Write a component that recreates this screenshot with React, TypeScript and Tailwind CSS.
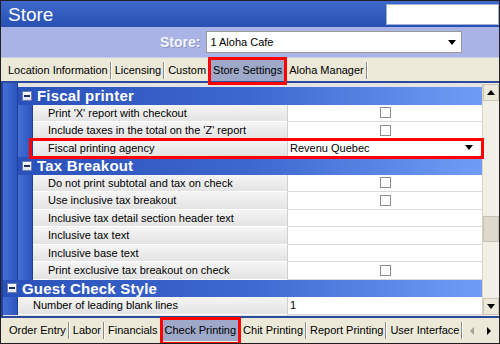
import React from "react";

const topTabs = ["Location Information", "Licensing", "Custom", "Store Settings", "Aloha Manager"];
const bottomTabs = ["Order Entry", "Labor", "Financials", "Check Printing", "Chit Printing", "Report Printing", "User Interface"];

type Row = { label: string; value?: "check" | "select" | string; highlight?: boolean };

const fiscal: Row[] = [
  { label: "Print 'X' report with checkout", value: "check" },
  { label: "Include taxes in the total on the 'Z' report", value: "check" },
  { label: "Fiscal printing agency", value: "select", highlight: true },
];

const tax: Row[] = [
  { label: "Do not print subtotal and tax on check", value: "check" },
  { label: "Use inclusive tax breakout", value: "check" },
  { label: "Inclusive tax detail section header text" },
  { label: "Inclusive tax text" },
  { label: "Inclusive base text" },
  { label: "Print exclusive tax breakout on check", value: "check" },
];

const SideBar = () => (
  <div className="w-[15px] shrink-0 bg-gradient-to-r from-[#4470d6] to-[#2c55bd] border-r border-[#1e3f9c]" />
);

const Minus = () => (
  <div className="w-[10px] h-[10px] bg-gradient-to-b from-white to-[#dfe3ee] border border-[#6b7fb4] flex items-center justify-center">
    <div className="w-[6px] h-[2px] bg-[#1c2d6e]" />
  </div>
);

const Header = ({ title }: { title: string }) => (
  <div className="flex items-center h-[17.5px] bg-gradient-to-r from-[#2a51b9] via-[#3d68cf] to-[#6f9df6] text-white font-bold text-[15px] leading-none">
    <div className="pl-[4px] pr-[5px]">
      <Minus />
    </div>
    <span className="tracking-[0.2px]">{title}</span>
  </div>
);

const PropRow = ({ row }: { row: Row }) => (
  <div className="relative flex h-[17.5px] text-[11px] text-black">
    <div className="flex-1 flex items-center pl-[15px] bg-gradient-to-b from-[#f5f5f5] to-[#e3e3e3] border-b border-white whitespace-nowrap overflow-hidden">
      {row.label}
    </div>
    <div className="w-[195px] flex items-center bg-white border-l border-[#d0d0d0] border-b border-b-[#dadada]">
      {row.value === "check" && (
        <div className="mx-auto w-[11px] h-[11px] border border-[#8c8c8c] bg-white" />
      )}
      {row.value === "select" && (
        <div className="flex-1 flex items-center justify-between pl-[2px] pr-[9px]">
          <span>Revenu Quebec</span>
          <div className="w-0 h-0 border-l-[4px] border-r-[4px] border-t-[5px] border-l-transparent border-r-transparent border-t-black" />
        </div>
      )}
      {row.value && row.value !== "check" && row.value !== "select" && (
        <span className="pl-[2px]">{row.value}</span>
      )}
    </div>
    {row.highlight && (
      <div className="absolute -left-[4px] -right-[2px] -top-[2px] -bottom-[2px] border-[3px] border-[#ff0000] pointer-events-none" />
    )}
  </div>
);

const Tab = ({ label, active }: { label: string; active: boolean }) => (
  <div className="relative flex items-stretch">
    <div
      className={
        "flex items-center px-[2px] h-full whitespace-nowrap " +
        (active ? "bg-[#9ea8c8]" : "")
      }
    >
      {label}
    </div>
    <div className="w-[1px] bg-[#8a8a8a] my-[2px]" />
    <div className="w-[1px] bg-white my-[2px] mr-[1px]" />
    {active && (
      <div className="absolute -left-[3px] -right-[0px] -top-[3px] -bottom-[4px] border-[3px] border-[#ff0000]" />
    )}
  </div>
);

export default function App() {
  return (
    <div className="w-[500px] h-[344px] border border-[#202020] flex flex-col overflow-hidden font-['Liberation_Sans',Arial,sans-serif] bg-[#ece9d8]">
      {/* title */}
      <div className="h-[26px] shrink-0 flex items-center justify-between bg-gradient-to-b from-[#3f69cb] to-[#2850b3]">
        <span className="pl-[7px] text-white text-[19px] leading-none">Store</span>
        <div className="w-[113px] h-[21px] bg-white border border-[#9fb1d8]" />
      </div>

      {/* store selector */}
      <div className="h-[31px] shrink-0 flex items-center bg-[#aab3e6] border-b border-[#c8cdee]">
        <span className="ml-[159px] text-[14px] font-bold text-[#f4f5ff] [text-shadow:1px_1px_0_#8d96c4]">Store:</span>
        <div className="ml-[6px] w-[256px] h-[22px] bg-white border border-[#9a9a9a] flex items-center justify-between text-[11px] pl-[3px] pr-[5px]">
          <span>1 Aloha Cafe</span>
          <div className="w-0 h-0 border-l-[4px] border-r-[4px] border-t-[5px] border-l-transparent border-r-transparent border-t-black" />
        </div>
      </div>

      {/* top tabs */}
      <div className="h-[25px] shrink-0 flex items-end border-b-2 border-[#2b4a9c]">
        <div className="h-[21px] ml-[5px] flex text-[11px] text-black">
          {topTabs.map((t) => (
            <Tab key={t} label={t} active={t === "Store Settings"} />
          ))}
        </div>
      </div>

      {/* content */}
      <div className="flex-1 flex border-l-2 border-[#2340a0] bg-white overflow-hidden">
        <div className="flex-1 flex flex-col">
          <div className="flex">
            <SideBar />
            <div className="flex-1 flex flex-col pt-[4px] bg-[#e3e3e3]">
              <Header title="Fiscal printer" />
              <div className="flex">
                <SideBar />
                <div className="flex-1 flex flex-col">
                  {fiscal.map((r) => (
                    <PropRow key={r.label} row={r} />
                  ))}
                </div>
              </div>
              <Header title="Tax Breakout" />
              <div className="flex">
                <SideBar />
                <div className="flex-1 flex flex-col">
                  {tax.map((r) => (
                    <PropRow key={r.label} row={r} />
                  ))}
                </div>
              </div>
            </div>
          </div>
          <Header title="Guest Check Style" />
          <div className="flex">
            <SideBar />
            <div className="flex-1 flex flex-col">
              <PropRow row={{ label: "Number of leading blank lines", value: "1" }} />
            </div>
          </div>
          <div className="flex-1 bg-[#e3e3e3]" />
        </div>

        {/* scrollbar */}
        <div className="w-[17px] shrink-0 flex flex-col bg-[#f1efe6] border-l border-[#d8d5c8]">
          <div className="h-[17px] mt-[1px] flex items-center justify-center bg-[#ece9d8] border border-[#c9c6b8]">
            <div className="w-0 h-0 border-l-[4px] border-r-[4px] border-b-[5px] border-l-transparent border-r-transparent border-b-black" />
          </div>
          <div className="h-[115px]" />
          <div className="h-[26px] bg-[#ddd9cc] border border-[#c4c0b2]" />
          <div className="flex-1" />
          <div className="h-[17px] mb-[1px] flex items-center justify-center bg-[#ece9d8] border border-[#c9c6b8]">
            <div className="w-0 h-0 border-l-[4px] border-r-[4px] border-t-[5px] border-l-transparent border-r-transparent border-t-black" />
          </div>
        </div>
      </div>

      {/* bottom tabs */}
      <div className="h-[27px] shrink-0 flex items-center border-t-2 border-[#2b4a9c] text-[11px] text-black">
        <div className="h-[21px] ml-[6px] flex">
          {bottomTabs.map((t) => (
            <Tab key={t} label={t} active={t === "Check Printing"} />
          ))}
        </div>
        <div className="ml-[6px] flex items-center gap-[13px]">
          <div className="w-0 h-0 border-t-[4px] border-b-[4px] border-r-[4px] border-t-transparent border-b-transparent border-r-[#a0a0a0]" />
          <div className="w-0 h-0 border-t-[4px] border-b-[4px] border-l-[4px] border-t-transparent border-b-transparent border-l-black" />
        </div>
      </div>
    </div>
  );
}
